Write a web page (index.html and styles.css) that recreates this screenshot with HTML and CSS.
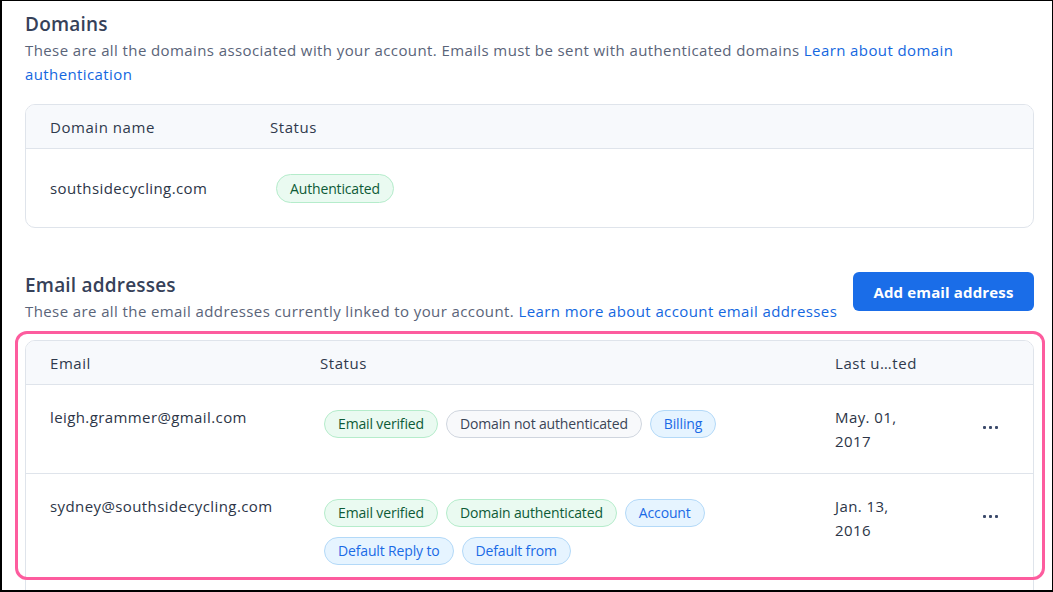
FILE: index.html
```html
<!DOCTYPE html>
<html lang="en">
<head>
<meta charset="utf-8">
<title>Domains and email addresses</title>
<link rel="stylesheet" href="styles.css">
</head>
<body>
<div class="frame">
  <section class="section">
    <h2 class="title">Domains</h2>
    <p class="desc">These are all the domains associated with your account. Emails must be sent with authenticated domains <a href="#" class="link">Learn about domain authentication</a></p>
    <div class="table domains">
      <div class="row head">
        <div class="cell">Domain name</div>
        <div class="cell">Status</div>
      </div>
      <div class="row body">
        <div class="cell">southsidecycling.com</div>
        <div class="cell"><span class="pill green">Authenticated</span></div>
      </div>
    </div>
  </section>

  <section class="section emails-section">
    <div class="section-head">
      <div class="section-text">
        <h2 class="title">Email addresses</h2>
        <p class="desc">These are all the email addresses currently linked to your account. <a href="#" class="link">Learn more about account email addresses</a></p>
      </div>
      <button class="btn">Add email address</button>
    </div>
    <div class="table-wrap">
      <div class="table emails">
        <div class="row head">
          <div class="cell">Email</div>
          <div class="cell">Status</div>
          <div class="cell">Last u…ted</div>
          <div class="cell"></div>
        </div>
        <div class="row body">
          <div class="cell">leigh.grammer@gmail.com</div>
          <div class="cell pills">
            <span class="pill green">Email verified</span>
            <span class="pill gray">Domain not authenticated</span>
            <span class="pill blue">Billing</span>
          </div>
          <div class="cell date">May. 01, 2017</div>
          <div class="cell"><button class="more" aria-label="More"><span></span><span></span><span></span></button></div>
        </div>
        <div class="row body">
          <div class="cell">sydney@southsidecycling.com</div>
          <div class="cell pills">
            <span class="pill green">Email verified</span>
            <span class="pill green">Domain authenticated</span>
            <span class="pill blue">Account</span>
            <span class="pill blue">Default Reply to</span>
            <span class="pill blue">Default from</span>
          </div>
          <div class="cell date">Jan. 13, 2016</div>
          <div class="cell"><button class="more" aria-label="More"><span></span><span></span><span></span></button></div>
        </div>
      </div>
      <div class="highlight"></div>
    </div>
  </section>
</div>
</body>
</html>
```

FILE: styles.css
```css
* { box-sizing: border-box; }
html, body { margin: 0; padding: 0; }
body {
  font-family: "Open Sans", "Noto Sans", sans-serif;
  color: #2c3547;
  background: #fff;
}
.frame {
  width: 1053px;
  height: 592px;
  overflow: hidden;
  border: 1px solid #000;
  border-left-width: 2px;
  border-bottom-width: 2px;
  padding: 9px 18px 0 23px;
  background: #fff;
}
.section { width: 1009px; }
.title {
  margin: 0;
  font-size: 19px;
  line-height: 28px;
  font-weight: 600;
  letter-spacing: 0.2px;
  color: #364159;
}
.desc {
  margin: 0;
  font-size: 15px;
  line-height: 24px;
  color: #5a6479;
  letter-spacing: 0.4px;
  padding-right: 40px;
}
.emails-section .desc { padding-right: 0; }
.link { color: #1467e0; text-decoration: none; }
.table {
  border: 1px solid #dfe4eb;
  border-radius: 10px;
  overflow: hidden;
  background: #fff;
}
.domains { margin-top: 18px; }
.row {
  display: grid;
  padding: 0 24px;
}
.domains .row { grid-template-columns: 220px 1fr; }
.row.head {
  height: 44px;
  align-items: center;
  background: #f7f9fc;
  border-bottom: 1px solid #dfe4eb;
  font-size: 15px;
  letter-spacing: 0.55px;
  color: #2f394d;
}
.domains .row.body {
  height: 78px;
  align-items: center;
  font-size: 15px;
  letter-spacing: 0.4px;
}
.domains .pill { margin-left: 6px; }
.pill {
  display: inline-flex;
  align-items: center;
  height: 28px;
  padding: 0 13px;
  border-radius: 14px;
  border: 1px solid;
  font-size: 14px;
  letter-spacing: -0.15px;
  white-space: nowrap;
}
.domains .pill { height: 29px; border-radius: 15px; }
.green { background: #eafaf1; border-color: #b5eccb; color: #0d5a37; }
.gray { background: #f8f9fb; border-color: #cfd5de; color: #3b4557; }
.blue { background: #e6f4ff; border-color: #b3d9f8; color: #1a6ae6; }

.emails-section { margin-top: 43px; }
.section-head {
  display: flex;
  justify-content: space-between;
  align-items: flex-start;
}
.btn {
  margin-top: 1px;
  width: 181px;
  height: 39px;
  border: none;
  border-radius: 6px;
  background: #1a6de8;
  color: #fff;
  font-family: inherit;
  font-size: 15px;
  font-weight: 700;
  letter-spacing: 0.15px;
  flex-shrink: 0;
}
.table-wrap {
  position: relative;
  margin-top: 17px;
}
.emails .row { grid-template-columns: 270px 515px 100px 1fr; }
.emails .row.body {
  padding-top: 20px;
  padding-bottom: 20px;
  border-bottom: 1px solid #dfe4eb;
  font-size: 15px;
  line-height: 24px;
  letter-spacing: 0.4px;
  align-items: start;
}
.emails .row.body:last-child { padding-bottom: 40px; }
.pills {
  display: flex;
  flex-wrap: wrap;
  gap: 10px 8px;
  padding-left: 4px;
  padding-top: 5px;
  padding-right: 60px;
}
.date { padding-right: 15px; }
.more {
  margin: 6px 0 0 39px;
  width: 32px;
  height: 32px;
  border: none;
  background: transparent;
  display: flex;
  align-items: center;
  justify-content: center;
  gap: 3px;
  padding: 0;
}
.more span {
  width: 3px;
  height: 3px;
  background: #3b4a6b;
  border-radius: 1px;
}
.highlight {
  position: absolute;
  top: -9px;
  left: -10px;
  right: -11px;
  height: 249px;
  border: 3px solid #fd5c9e;
  border-radius: 12px;
  pointer-events: none;
}
```
